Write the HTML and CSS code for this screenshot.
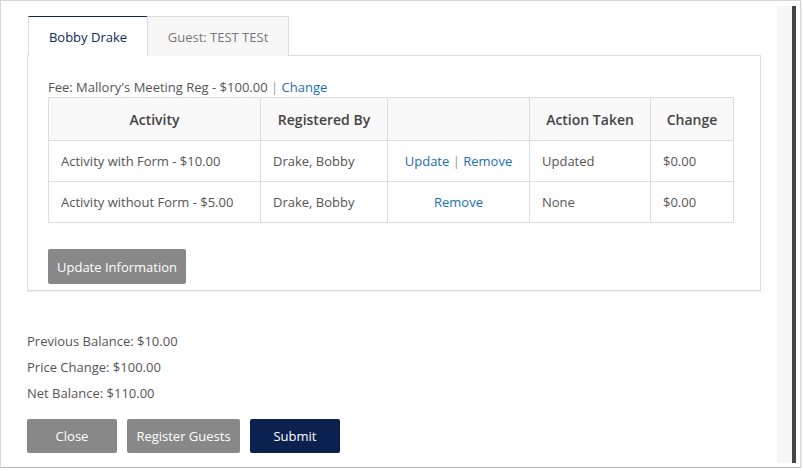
FILE: index.html
```html
<!DOCTYPE html>
<html>
<head>
<meta charset="utf-8">
<link rel="stylesheet" href="styles.css">
</head>
<body>
<div class="modal">
  <div class="content">
    <div class="tabs">
      <div class="tab active">Bobby Drake</div>
      <div class="tab">Guest: TEST TESt</div>
    </div>
    <div class="panel">
      <div class="fee">Fee: Mallory's Meeting Reg - $100.00 <span class="sep">|</span> <a class="link">Change</a></div>
      <table class="grid">
        <colgroup>
          <col class="c1"><col class="c2"><col class="c3"><col class="c4"><col class="c5">
        </colgroup>
        <thead>
          <tr><th>Activity</th><th>Registered By</th><th></th><th>Action Taken</th><th>Change</th></tr>
        </thead>
        <tbody>
          <tr><td>Activity with Form - $10.00</td><td>Drake, Bobby</td><td class="center"><a class="link">Update</a> <span class="sep">|</span> <a class="link">Remove</a></td><td>Updated</td><td>$0.00</td></tr>
          <tr><td>Activity without Form - $5.00</td><td>Drake, Bobby</td><td class="center"><a class="link">Remove</a></td><td>None</td><td>$0.00</td></tr>
        </tbody>
      </table>
      <button class="btn gray update">Update Information</button>
    </div>
    <div class="summary">
      <div class="line">Previous Balance: $10.00</div>
      <div class="line">Price Change: $100.00</div>
      <div class="line">Net Balance: $110.00</div>
    </div>
    <div class="actions">
      <button class="btn gray w90">Close</button>
      <button class="btn gray w113">Register Guests</button>
      <button class="btn navy w90">Submit</button>
    </div>
  </div>
  <div class="scroll">
    <div class="track"></div>
    <div class="thumb"></div>
  </div>
</div>
</body>
</html>
```

FILE: styles.css
```css
html, body {
  margin: 0;
  padding: 0;
  background: #ffffff;
}
body {
  font-family: "Open Sans", "Liberation Sans", sans-serif;
  font-size: 13px;
  color: #555555;
}
.modal {
  box-sizing: border-box;
  width: 801px;
  height: 468px;
  border: 1px solid #d6d6d6;
  border-bottom-color: #b8b8b8;
  box-shadow: 0 2px 2px rgba(0, 0, 0, 0.18);
  display: flex;
  background: #fff;
}
.content {
  width: 776px;
  box-sizing: border-box;
  padding: 15px 0 0 26px;
}
.scroll {
  display: flex;
  margin: 5px 0 4px 0;
}
.track {
  width: 15px;
  background: #f7f7f7;
}
.thumb {
  width: 4px;
  background: #444444;
}
.tabs {
  display: flex;
  padding-left: 1px;
}
.tab {
  box-sizing: border-box;
  height: 40px;
  line-height: 40px;
  width: 142px;
  text-align: center;
  color: #777;
  background: #f7f7f7;
  border: 1px solid #dddddd;
  border-bottom: none;
  margin-bottom: -1px;
  position: relative;
}
.tab.active {
  background: #fff;
  color: #0b2a5b;
  border-top: 1px solid #0b2a5b;
  border-right: none;
  width: 119px;
  z-index: 1;
}
.panel {
  box-sizing: border-box;
  width: 734px;
  border: 1px solid #dddddd;
  border-bottom-color: #d8d8d8;
  box-shadow: 0 1px 1px rgba(0, 0, 0, 0.05);
  padding: 22px 0 6px 20px;
}
.fee {
  line-height: 18px;
  margin-bottom: 1px;
}
.link {
  color: #1a6fb3;
  cursor: pointer;
}
.sep {
  color: #999;
}
.grid {
  border-collapse: collapse;
  table-layout: fixed;
  width: 685px;
}
.c1 { width: 212px; }
.c2 { width: 127px; }
.c3 { width: 142px; }
.c4 { width: 121px; }
.c5 { width: 83px; }
.grid th, .grid td {
  border: 1px solid #dddddd;
  height: 41px;
  padding: 0 12px;
  box-sizing: border-box;
}
.grid th {
  background: #f9f9f9;
  color: #444;
  font-weight: 600;
  font-size: 14px;
  text-align: center;
  height: 43px;
}
.grid td {
  text-align: left;
}
.grid td.center {
  text-align: center;
}
.btn {
  font-family: "Open Sans", "Liberation Sans", sans-serif;
  font-size: 13px;
  color: #fff;
  border: none;
  border-radius: 2px;
  height: 35px;
  padding: 0;
  cursor: pointer;
}
.btn.gray {
  background: #888888;
}
.btn.navy {
  background: #0b2150;
}
.btn.w90 {
  width: 90px;
}
.btn.w113 {
  width: 113px;
}
.update {
  margin-top: 26px;
  width: 138px;
}
.summary {
  padding-top: 37px;
}
.line {
  line-height: 26px;
}
.actions {
  display: flex;
  gap: 10px;
  margin-top: 13px;
}
.actions .btn {
  height: 34px;
}
```
